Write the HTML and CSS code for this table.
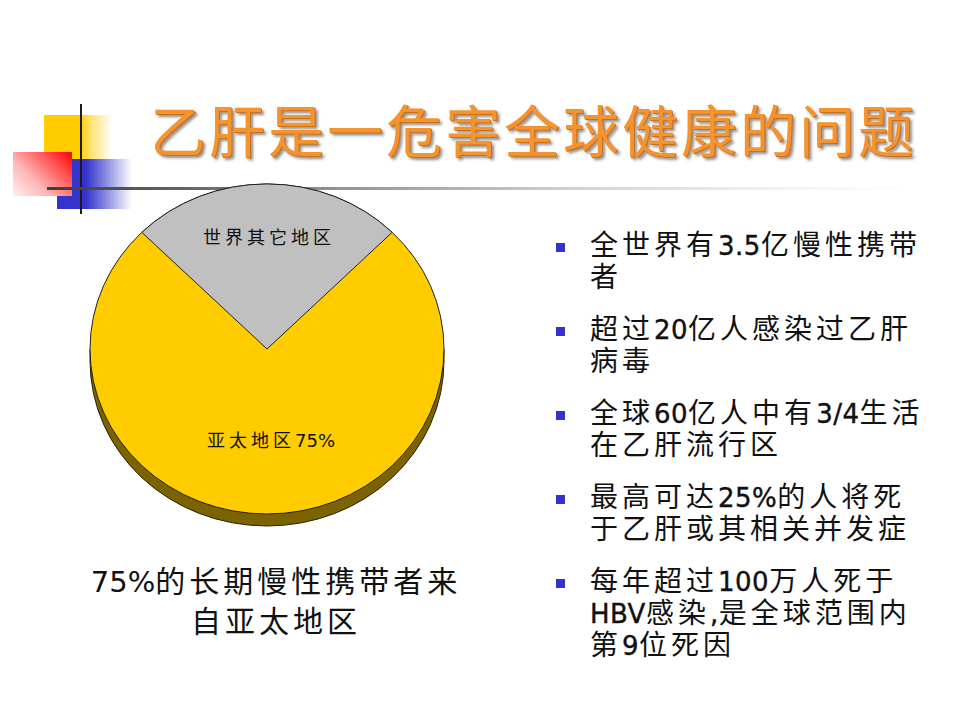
FILE: index.html
```html
<!DOCTYPE html>
<html lang="zh-CN">
<head>
<meta charset="utf-8">
<title>乙肝是一危害全球健康的问题</title>
<link rel="stylesheet" href="styles.css">
</head>
<body>
<div class="slide">
  <div class="deco" aria-hidden="true">
    <div class="sq sq-yellow"></div>
    <div class="sq sq-blue"></div>
    <div class="sq sq-red"></div>
    <div class="vline"></div>
  </div>
  <header class="head">
    <h1 class="title">乙肝是一危害全球健康的问题</h1>
  </header>
  <div class="rule"></div>
  <main class="body">
    <section class="chart">
      <svg class="pie" width="362" height="346" viewBox="0 0 362 346">
        <path class="rim" d="M4 167 L4 179 A177 165 0 0 0 358 179 L358 167 Z"/>
        <ellipse class="face" cx="181" cy="167" rx="177" ry="165"/>
        <path class="slice" d="M181 167 L55.8 50.3 A177 165 0 0 1 306.2 50.3 Z"/>
        <text class="lbl" x="183" y="62" text-anchor="middle">世界其它地区</text>
        <text class="lbl" x="185" y="265" text-anchor="middle">亚太地区<tspan class="lbl-n">75%</tspan></text>
      </svg>
      <p class="caption"><span class="cn">75%</span>的长期慢性携带者来<br>自亚太地区</p>
    </section>
    <ul class="points">
      <li><span class="txt">全世界有<span class="n">3.5</span>亿慢性携带<br>者</span></li>
      <li><span class="txt">超过<span class="n">20</span>亿人感染过乙肝<br>病毒</span></li>
      <li><span class="txt">全球<span class="n">60</span>亿人中有<span class="n">3/4</span>生活<br>在乙肝流行区</span></li>
      <li><span class="txt">最高可达<span class="n">25%</span>的人将死<br>于乙肝或其相关并发症</span></li>
      <li><span class="txt">每年超过<span class="n">100</span>万人死于<br><span class="n">HBV</span>感染<span class="n">,</span>是全球范围内<br>第<span class="n">9</span>位死因</span></li>
    </ul>
  </main>
</div>
</body>
</html>
```

FILE: styles.css
```css
html, body {
  margin: 0;
  padding: 0;
  background: #ffffff;
}

.slide {
  position: relative;
  width: 960px;
  height: 720px;
  overflow: hidden;
  background: #ffffff;
  font-family: "Liberation Sans", "Noto Sans CJK SC", sans-serif;
  color: #000;
}

/* decorative squares (overlapping shapes) */
.deco {
  position: absolute;
  left: 0;
  top: 0;
  width: 140px;
  height: 220px;
}
.sq {
  position: absolute;
}
.sq-yellow {
  left: 44px;
  top: 115px;
  width: 68px;
  height: 45px;
  background: linear-gradient(to right, #ffcc00 0%, #ffcc00 52%, #ffe680 72%, #ffffff 100%);
}
.sq-blue {
  left: 57px;
  top: 159px;
  width: 75px;
  height: 50px;
  background: linear-gradient(to right, #3333cc 0%, #3333cc 38%, #8080dd 62%, #ffffff 100%);
}
.sq-red {
  left: 13px;
  top: 152px;
  width: 59px;
  height: 44px;
  background: linear-gradient(225deg, #ff0000 0%, #ff4a4a 25%, #ffb8b8 65%, #fff0f0 100%);
}
.vline {
  position: absolute;
  left: 80px;
  top: 104px;
  width: 2px;
  height: 110px;
  background: #1c1c1c;
}

.head {
  padding: 96px 0 0 150px;
}
.title {
  margin: 0;
  font-family: "Noto Sans CJK SC", sans-serif;
  font-size: 56px;
  line-height: 64px;
  font-weight: 400;
  letter-spacing: 3px;
  color: #f5932f;
  white-space: nowrap;
  text-shadow: 1px 1px 0 #c8701c, 3px 3px 3px rgba(80, 80, 80, 0.65);
  position: relative;
}

.rule {
  position: relative;
  z-index: 1;
  margin: 27px 0 -8px 47px;
  width: 865px;
  height: 3px;
  background: linear-gradient(to right, #3c3c3c 0%, #8a8a8a 30%, #d4d4d4 62%, #f2f2f2 85%, #ffffff 100%);
}

.body {
  display: grid;
  grid-template-columns: 548px 1fr;
}

.chart {
  position: relative;
  z-index: 2;
}
.pie {
  display: block;
  margin-left: 86px;
}
.rim {
  fill: #7a6300;
  stroke: #2a2200;
  stroke-width: 1;
}
.face {
  fill: #ffcc00;
  stroke: #222;
  stroke-width: 1;
}
.slice {
  fill: #c0c0c0;
  stroke: #222;
  stroke-width: 1;
}
.lbl {
  font-family: "Noto Sans CJK SC", sans-serif;
  font-size: 18px;
  font-weight: 400;
  letter-spacing: 4px;
  fill: #111;
}
.lbl-n {
  font-family: "DejaVu Sans", sans-serif;
  font-weight: 400;
  letter-spacing: 0;
}

.caption {
  margin: 34px 0 0 0;
  width: 552px;
  text-align: center;
  font-size: 30px;
  line-height: 40px;
  letter-spacing: 4px;
  font-weight: 400;
  color: #111;
}
.cn {
  font-family: "DejaVu Sans", sans-serif;
  font-size: 29px;
  letter-spacing: 0;
  font-weight: 400;
}

.points {
  list-style: none;
  margin: 0;
  padding: 48px 0 0 8px;
}
.points li {
  display: flex;
  align-items: flex-start;
  margin-bottom: 20px;
  font-size: 28px;
  line-height: 32px;
  letter-spacing: 4px;
  color: #111;
}
.points li::before {
  content: "";
  flex: none;
  width: 9px;
  height: 9px;
  margin-top: 13px;
  margin-right: 25px;
  background: #3333cc;
}
.txt {
  white-space: nowrap;
}
.n {
  font-family: "DejaVu Sans", sans-serif;
  font-size: 26px;
  letter-spacing: 0.5px;
  -webkit-text-stroke: 0.4px #111;
}
```
